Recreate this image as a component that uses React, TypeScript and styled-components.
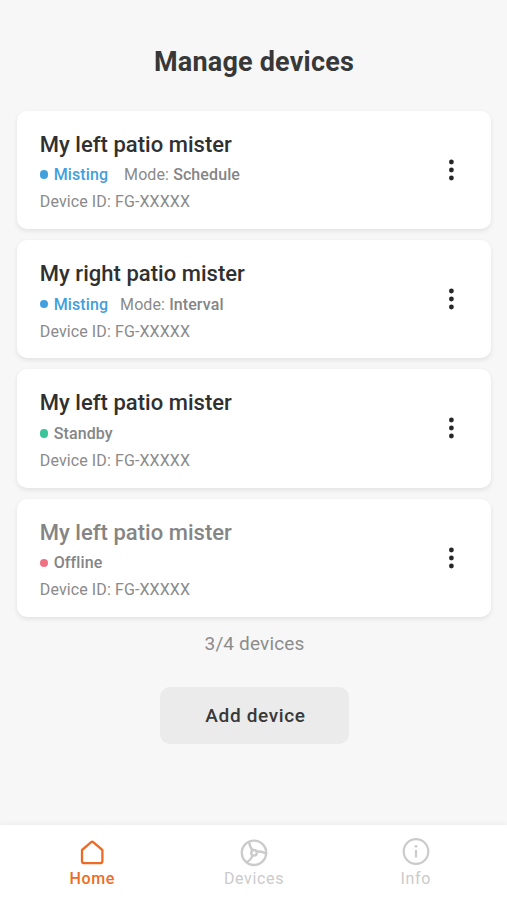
import React from "react";
import styled, { createGlobalStyle } from "styled-components";

const GlobalStyle = createGlobalStyle`
  * { box-sizing: border-box; }
  body { margin: 0; background: #f7f7f7; }
  button { font: inherit; border: 0; background: none; padding: 0; cursor: pointer; }
`;

const Screen = styled.div`
  height: 900px;
  display: flex;
  flex-direction: column;
  overflow: hidden;
  background: #f7f7f7;
  color: #333;
  font-family: Roboto, "Liberation Sans", sans-serif;
`;

const Content = styled.main`
  flex: 1;
  display: flex;
  flex-direction: column;
  align-items: center;
  padding: 42px 16px 0 17px;
`;

const Heading = styled.h1`
  margin: 0 0 28.6px;
  font-size: 27px;
  line-height: 40px;
  font-weight: 700;
  letter-spacing: 0.2px;
  color: #383838;
`;

const DeviceList = styled.ul`
  list-style: none;
  width: 100%;
  margin: 0;
  padding: 0;
  display: flex;
  flex-direction: column;
  gap: 11px;
`;

const Card = styled.li`
  height: 118.4px;
  display: flex;
  justify-content: space-between;
  padding: 18.1px 28px 0 22.8px;
  border-radius: 10px;
  background: #fff;
  box-shadow: 0 2px 5px rgba(0, 0, 0, 0.09);
`;

const DeviceName = styled.h2<{ $muted?: boolean }>`
  margin: 0;
  font-size: 22px;
  line-height: 32.5px;
  font-weight: 500;
  letter-spacing: 0.03px;
  color: ${(p) => (p.$muted ? "#858585" : "#303030")};
`;

const Row = styled.div`
  display: flex;
  align-items: center;
  font-size: 16px;
  line-height: 27px;
  letter-spacing: 0.1px;
  color: #8a8a8a;
`;

const Dot = styled.span<{ $color: string }>`
  width: 8.5px;
  height: 8.5px;
  margin-right: 5.4px;
  border-radius: 50%;
  background: ${(p) => p.$color};
`;

const Status = styled.span<{ $color?: string }>`
  font-weight: 500;
  color: ${(p) => p.$color ?? "#858585"};
`;

const Mode = styled.span<{ $gap: number }>`
  margin-left: ${(p) => p.$gap}px;
  b { font-weight: 500; color: #858585; }
`;

const MenuButton = styled.button`
  height: 24px;
  margin-top: 29px;
  display: flex;
  color: #262626;
`;

const Count = styled.p`
  margin: 13px 0 0 1px;
  font-size: 19px;
  line-height: 28px;
  letter-spacing: 0.15px;
  color: #8c8c8c;
`;

const AddButton = styled.button`
  width: 189px;
  height: 57px;
  margin-top: 29px;
  padding-left: 3px;
  border-radius: 10px;
  background: #ebebeb;
  && { font-size: 19px; font-weight: 500; }
  letter-spacing: 0.65px;
  color: #383838;
`;

const TabBar = styled.nav`
  height: 75px;
  display: grid;
  grid-template-columns: repeat(3, 161.8px);
  justify-content: center;
  padding-left: 1px;
  background: #fff;
  box-shadow: 0 -2px 4px rgba(0, 0, 0, 0.04);
`;

const Tab = styled.button<{ $active?: boolean }>`
  display: flex;
  flex-direction: column;
  align-items: center;
  padding-top: 12px;
  && { font-size: 16px; }
  line-height: 24px;
  letter-spacing: 0.65px;
  font-weight: ${(p) => (p.$active ? 500 : 400)};
  color: ${(p) => (p.$active ? "#ec6c26" : "#cbcbcb")};
  svg { display: block; }
`;

const KebabIcon = () => (
  <svg width="24" height="24" viewBox="0 0 24 24" fill="currentColor">
    <circle cx="12.4" cy="4" r="2.4" />
    <circle cx="12.4" cy="12" r="2.4" />
    <circle cx="12.4" cy="20" r="2.4" />
  </svg>
);

const HomeIcon = () => (
  <svg width="30" height="30" viewBox="0 0 30 30" fill="none" stroke="currentColor" strokeWidth="2.3" strokeLinejoin="round">
    <path d="M5 13 14.200 5.200q1-.8 2 0l9.200 7.800V24q0 2.200-2.200 2.200H7.200q-2.200 0-2.200-2.200Z" />
  </svg>
);

const WheelIcon = () => (
  <svg width="30" height="30" viewBox="0 0 30 30" fill="none" stroke="currentColor" strokeWidth="2.400">
    <circle cx="15" cy="15.800" r="12.200" />
    <circle cx="15" cy="15.800" r="2.800" />
    <path d="M10.200 4.800q.5 5.500 3.500 8.600M17.600 14.800q4.200-1 9.400 1.600M13.800 18.400q-1.800 4.400-5.800 6.800" />
  </svg>
);

const InfoIcon = () => (
  <svg width="30" height="30" viewBox="0 0 30 30" fill="none" stroke="currentColor" strokeWidth="2.200">
    <circle cx="15" cy="14.500" r="12.300" />
    <path d="M15 13v7.500" />
    <circle cx="15" cy="9.300" r="1.400" fill="currentColor" stroke="none" />
  </svg>
);

type Device = {
  name: string;
  status: string;
  dot: string;
  statusColor?: string;
  mode?: string;
  modeGap?: number;
  muted?: boolean;
};

const devices: Device[] = [
  { name: "My left patio mister", status: "Misting", dot: "#429fdd", statusColor: "#429fdd", mode: "Schedule", modeGap: 16 },
  { name: "My right patio mister", status: "Misting", dot: "#429fdd", statusColor: "#429fdd", mode: "Interval", modeGap: 12 },
  { name: "My left patio mister", status: "Standby", dot: "#3bc49a" },
  { name: "My left patio mister", status: "Offline", dot: "#ef7184", muted: true },
];

export default function App() {
  return (
    <Screen>
      <GlobalStyle />
      <Content>
        <Heading>Manage devices</Heading>
        <DeviceList>
          {devices.map((d, i) => (
            <Card key={i}>
              <div>
                <DeviceName $muted={d.muted}>{d.name}</DeviceName>
                <Row>
                  <Dot $color={d.dot} />
                  <Status $color={d.statusColor}>{d.status}</Status>
                  {d.mode && (
                    <Mode $gap={d.modeGap ?? 16}>
                      Mode: <b>{d.mode}</b>
                    </Mode>
                  )}
                </Row>
                <Row>Device ID: FG-XXXXX</Row>
              </div>
              <MenuButton aria-label="Device options">
                <KebabIcon />
              </MenuButton>
            </Card>
          ))}
        </DeviceList>
        <Count>3/4 devices</Count>
        <AddButton>Add device</AddButton>
      </Content>
      <TabBar>
        <Tab $active>
          <HomeIcon />
          Home
        </Tab>
        <Tab>
          <WheelIcon />
          Devices
        </Tab>
        <Tab>
          <InfoIcon />
          Info
        </Tab>
      </TabBar>
    </Screen>
  );
}
